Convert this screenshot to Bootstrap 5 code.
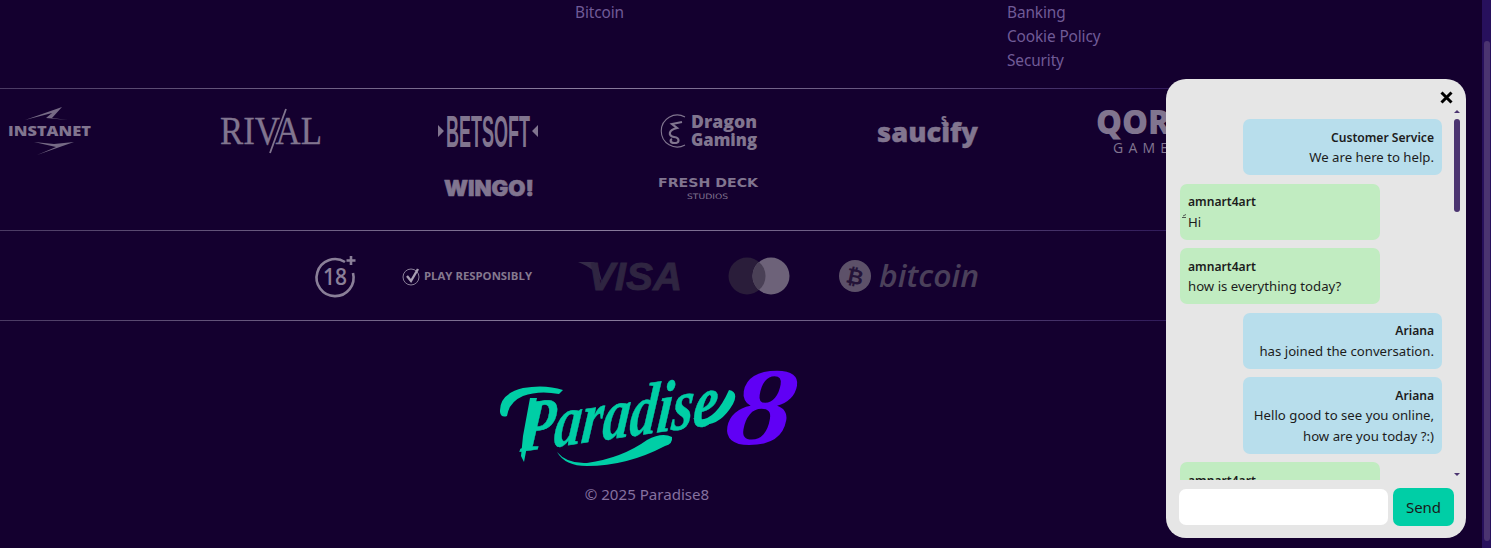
<!DOCTYPE html>
<html lang="en">
<head>
<meta charset="utf-8">
<title>Paradise8</title>
<link href="https://cdn.jsdelivr.net/npm/bootstrap@5.3.0/dist/css/bootstrap.min.css" rel="stylesheet">
<style>
html,body{height:100%;}
body{background:#14002f;font-family:"Noto Sans","Open Sans",sans-serif;overflow:hidden;color:#7d6d96;}
.site-main{width:1294px;}
.link-cols{height:88px;padding-left:575px;padding-top:1px;}
.link-col{width:432px;}
.link-col a{display:block;height:24px;line-height:24px;font-size:15.4px;color:#705b97;text-decoration:none;letter-spacing:-.12px;}
.rule-line{height:1px;background:linear-gradient(90deg,#4a3a63 0,#8b7d9e 45%,#6a5a82 65%,#2c1657 92%);}
.prov-wrap{margin-left:-60px;width:1316px;padding:14px 0;height:141px;}
.prov-cell{width:219.33px;height:56px;}
.logo-fill{fill:#81758f;}
.logo-svg{overflow:visible;font-family:"Open Sans","Noto Sans",sans-serif;}
.pay-row{height:89px;gap:47px;}
.brand-block{padding-top:45px;}
.copy-line{font-size:15.1px;line-height:22px;color:#85709f;margin-top:13px;}
.chat-panel{position:fixed;left:1166px;top:79px;width:300px;height:459px;background:#e6e6e6;border-radius:20px;color:#1c1c1c;font-size:13.2px;}
.chat-close{position:absolute;left:274px;top:12px;width:13px;height:13px;}
.chat-log{position:absolute;left:14px;top:40px;width:262px;height:361px;overflow:hidden;}
.bubble{width:200px;border-radius:7px;padding:7.5px 8px;margin-bottom:8.2px;line-height:20.67px;position:relative;}
.bubble-them{background:#b8deec;text-align:right;margin-left:63px;width:199px;}
.bubble-me{background:#c1ecc1;}
.bubble b{font-weight:600;font-size:12.1px;display:block;padding-top:1px;line-height:19.67px;}
.stray-mark{position:absolute;left:2px;top:30px;width:5px;height:4px;}
.chat-bar-thumb{position:absolute;left:288px;top:40px;width:6px;height:93px;border-radius:3px;background:#4b3470;}
.chat-arrow{position:absolute;left:288px;width:0;height:0;border-left:3px solid transparent;border-right:3px solid transparent;}
.chat-arrow-up{top:31px;border-bottom:3px solid #4b3470;}
.chat-arrow-down{top:394px;border-top:3px solid #4b3470;}
.chat-form{position:absolute;left:13px;top:409px;width:275px;gap:5px;}
.chat-input{width:209px;height:36px;margin-top:1px;background:#fff;border:0;border-radius:7px;}
.chat-send{width:61px;height:38px;background:#00cea6;border:0;border-radius:7px;padding:0;font-size:15px;color:#1a1a1a;}
.page-track{position:fixed;right:0;top:0;width:9px;height:100%;background:#27105c;}
.page-thumb{position:absolute;left:2px;top:41px;width:6px;height:500px;border-radius:3px;background:#4b3470;}
</style>
</head>
<body class="m-0">
<main class="site-main">
  <div class="link-cols d-flex">
    <div class="link-col flex-shrink-0"><a href="#">Bitcoin</a></div>
    <div class="link-col flex-shrink-0"><a href="#">Banking</a><a href="#">Cookie Policy</a><a href="#">Security</a></div>
  </div>
  <div class="rule-line"></div>
  <div class="prov-wrap d-flex flex-wrap justify-content-center">
    <div class="prov-cell d-flex align-items-center justify-content-center">
      <svg class="logo-svg" width="84" height="52" viewBox="0 0 84 52"><path class="logo-fill" d="M17 15 L54 2 L44 13 L60 15 L38 13 L44 8 Z M26 37 L48 42 L29 50 L66 37 L46 39 Z" opacity=".9"/><text class="logo-fill" x="0" y="31" font-size="14.5" font-weight="800" textLength="83" lengthAdjust="spacingAndGlyphs">INSTANET</text></svg>
    </div>
    <div class="prov-cell d-flex align-items-center justify-content-center">
      <svg class="logo-svg" width="100" height="46" viewBox="0 0 100 46"><text class="logo-fill" x="1" y="36" font-family="Liberation Serif" font-size="39" textLength="102" lengthAdjust="spacingAndGlyphs" stroke="#81758f" stroke-width=".3">RIVAL</text><path d="M51 45 L67 1" stroke="#81758f" stroke-width="1.8" fill="none"/></svg>
    </div>
    <div class="prov-cell d-flex align-items-center justify-content-center">
      <svg class="logo-svg" width="102" height="36" viewBox="0 0 102 36"><path class="logo-fill" d="M1 12 L7 18 L1 24 Z M101 12 L95 18 L101 24 Z"/><text class="logo-fill" transform="translate(9 34) scale(1 2)" font-family="Liberation Sans" font-weight="700" font-size="22" textLength="84" lengthAdjust="spacingAndGlyphs">BETSOFT</text></svg>
    </div>
    <div class="prov-cell d-flex align-items-center justify-content-center">
      <svg class="logo-svg" width="100" height="36" viewBox="0 0 100 36"><path d="M27 4 A16 16 0 1 0 27 32" stroke="#81758f" stroke-width="1.1" fill="none"/><path d="M24 9 L14 11 L19 15 C10 17 10 23 16 24 C22 25 22 30 16 30 C12 30 12 27 14 26" stroke="#81758f" stroke-width="2.2" fill="none"/><text class="logo-fill" x="33" y="15" font-size="17" font-weight="800" textLength="66" lengthAdjust="spacingAndGlyphs">Dragon</text><text class="logo-fill" x="33" y="33" font-size="17" font-weight="800" textLength="66" lengthAdjust="spacingAndGlyphs">Gaming</text></svg>
    </div>
    <div class="prov-cell d-flex align-items-center justify-content-center">
      <svg class="logo-svg" width="102" height="42" viewBox="0 0 102 42"><text class="logo-fill" x="1" y="32" font-size="27" font-weight="800" textLength="101" lengthAdjust="spacingAndGlyphs" stroke="#81758f" stroke-width=".4">saucify</text><text class="logo-fill" x="65" y="14" font-size="10" font-weight="800">S</text></svg>
    </div>
    <div class="prov-cell d-flex align-items-center justify-content-center">
      <svg class="logo-svg" width="100" height="48" viewBox="0 0 100 48"><text class="logo-fill" x="0" y="27" font-size="33" font-weight="800" textLength="98" lengthAdjust="spacingAndGlyphs">QORA</text><text class="logo-fill" x="17" y="46" font-size="14" font-weight="400" textLength="68">GAMES</text></svg>
    </div>
    <div class="prov-cell d-flex align-items-center justify-content-center">
      <svg class="logo-svg" width="92" height="24" viewBox="0 0 92 24"><text class="logo-fill" x="2" y="20" font-family="Inter" font-weight="900" font-size="21" textLength="90" lengthAdjust="spacingAndGlyphs" stroke="#81758f" stroke-width=".6">WINGO!</text></svg>
    </div>
    <div class="prov-cell d-flex align-items-center justify-content-center">
      <svg class="logo-svg" width="104" height="26" viewBox="0 0 104 26"><text class="logo-fill" x="2" y="12" font-family="DejaVu Sans" font-weight="700" font-size="12" textLength="100" lengthAdjust="spacingAndGlyphs">FRESH DECK</text><text class="logo-fill" x="31" y="24" font-family="DejaVu Sans" font-size="7.5" textLength="41" lengthAdjust="spacingAndGlyphs">STUDIOS</text></svg>
    </div>
  </div>
  <div class="rule-line"></div>
  <div class="pay-row d-flex align-items-center justify-content-center">
    <svg class="logo-svg" width="41" height="42" viewBox="0 0 41 42"><path d="M30 7 A18.5 18.5 0 1 0 38 18" stroke="#8a7f98" stroke-width="2.6" fill="none"/><path d="M36 1 V10 M31.500 5.500 H40.500" stroke="#8a7f98" stroke-width="2.6"/><text x="8" y="30" font-family="Open Sans" font-size="24" font-weight="600" fill="#8a7f98" textLength="24" lengthAdjust="spacingAndGlyphs">18</text></svg>
    <svg class="logo-svg" width="130" height="24" viewBox="0 0 130 24"><circle cx="8" cy="13" r="8" stroke="#8a7f98" stroke-width="1" fill="none"/><path d="M4 12 L8 17 L15 5" stroke="#a89fb3" stroke-width="2.4" fill="none"/><text x="21" y="16" font-family="Open Sans" font-weight="700" font-size="11" fill="#85798f" textLength="108" lengthAdjust="spacingAndGlyphs">PLAY RESPONSIBLY</text></svg>
    <svg class="logo-svg" width="102" height="30" viewBox="0 0 102 30"><path d="M-2 1 H12 Q16 1 18 6 L23 24 Q17 8 -2 1 Z" fill="#352b48"/><text x="8" y="29" font-family="Liberation Sans" font-style="italic" font-weight="700" font-size="39" fill="#2f2541" stroke="#2f2541" stroke-width=".9" textLength="94" lengthAdjust="spacingAndGlyphs">VISA</text></svg>
    <svg class="logo-svg" width="62" height="38" viewBox="0 0 62 38"><circle cx="18" cy="19" r="18.500" fill="#2a1d3a"/><circle cx="42" cy="19" r="18.500" fill="#6d6279"/><path d="M30 4.900 A18.500 18.500 0 0 1 30 33.100 A18.500 18.500 0 0 1 30 4.900 Z" fill="#4a4056"/></svg>
    <svg class="logo-svg" width="141" height="34" viewBox="0 0 141 34"><circle cx="17" cy="17" r="16" fill="#5d5169"/><text x="17" y="25" text-anchor="middle" font-family="Liberation Sans" font-weight="700" font-size="21" fill="#241338" transform="rotate(12 17 17)">₿</text><text x="41" y="28" font-family="Open Sans" font-style="italic" font-weight="600" font-size="31" fill="#4b405a" textLength="100" lengthAdjust="spacingAndGlyphs">bitcoin</text></svg>
  </div>
  <div class="rule-line"></div>
  <div class="brand-block text-center">
    <svg class="logo-svg" width="300" height="104" viewBox="0 0 300 104">
      <text x="38" y="72" transform="rotate(-8 120 60) skewX(-14)" font-family="Liberation Serif" font-style="italic" font-weight="700" font-size="72" fill="#00cea6" stroke="#00cea6" stroke-width=".5" textLength="198" lengthAdjust="spacingAndGlyphs">Paradise</text>
      <text transform="translate(225 78) scale(1.22 1) skewX(-8)" font-family="Liberation Serif" font-style="italic" font-weight="700" font-size="110" fill="#6000f5">8</text>
      <path d="M60 86 Q70 98 90 97 Q125 92 150 74 Q165 66 175 71 Q176 78 168 80 Q130 100 90 100 Q68 100 60 86 Z" fill="#00cea6"/>
      <path d="M3 46 Q2 28 26 22 Q48 18 66 24 L62 28 Q42 24 26 30 Q12 36 10 50 Q4 52 3 46 Z M40 32 L32 70 L27 96 L24 90 L26 70 L33 32 Z M196 52 Q216 60 232 24 Q242 26 236 38 Q222 62 202 58 Z" fill="#00cea6"/>
    </svg>
    <div class="copy-line">© 2025 Paradise8</div>
  </div>
</main>
<aside class="chat-panel">
  <svg class="chat-close" viewBox="0 0 13 13"><path d="M1.500 1.500 L11.500 11.500 M11.500 1.500 L1.500 11.500" stroke="#000" stroke-width="3"/></svg>
  <div class="chat-arrow chat-arrow-up"></div>
  <div class="chat-log">
    <div class="bubble bubble-them"><b>Customer Service</b>We are here to help.</div>
    <div class="bubble bubble-me"><b>amnart4art</b>Hi<svg class="stray-mark" viewBox="0 0 5 4"><path d="M0 3.500 H4 M1 2 L4 .5" stroke="#333" stroke-width=".8"/></svg></div>
    <div class="bubble bubble-me"><b>amnart4art</b>how is everything today?</div>
    <div class="bubble bubble-them"><b>Ariana</b>has joined the conversation.</div>
    <div class="bubble bubble-them"><b>Ariana</b>Hello good to see you online, how are you today ?:)</div>
    <div class="bubble bubble-me"><b>amnart4art</b>Hi</div>
  </div>
  <div class="chat-bar-thumb"></div>
  <div class="chat-arrow chat-arrow-down"></div>
  <form class="chat-form d-flex" onsubmit="return false">
    <input class="chat-input" type="text" aria-label="Message">
    <button class="chat-send btn" type="button">Send</button>
  </form>
</aside>
<div class="page-track"><div class="page-thumb"></div></div>
<script src="https://cdn.jsdelivr.net/npm/bootstrap@5.3.0/dist/js/bootstrap.bundle.min.js"></script>
</body>
</html>
